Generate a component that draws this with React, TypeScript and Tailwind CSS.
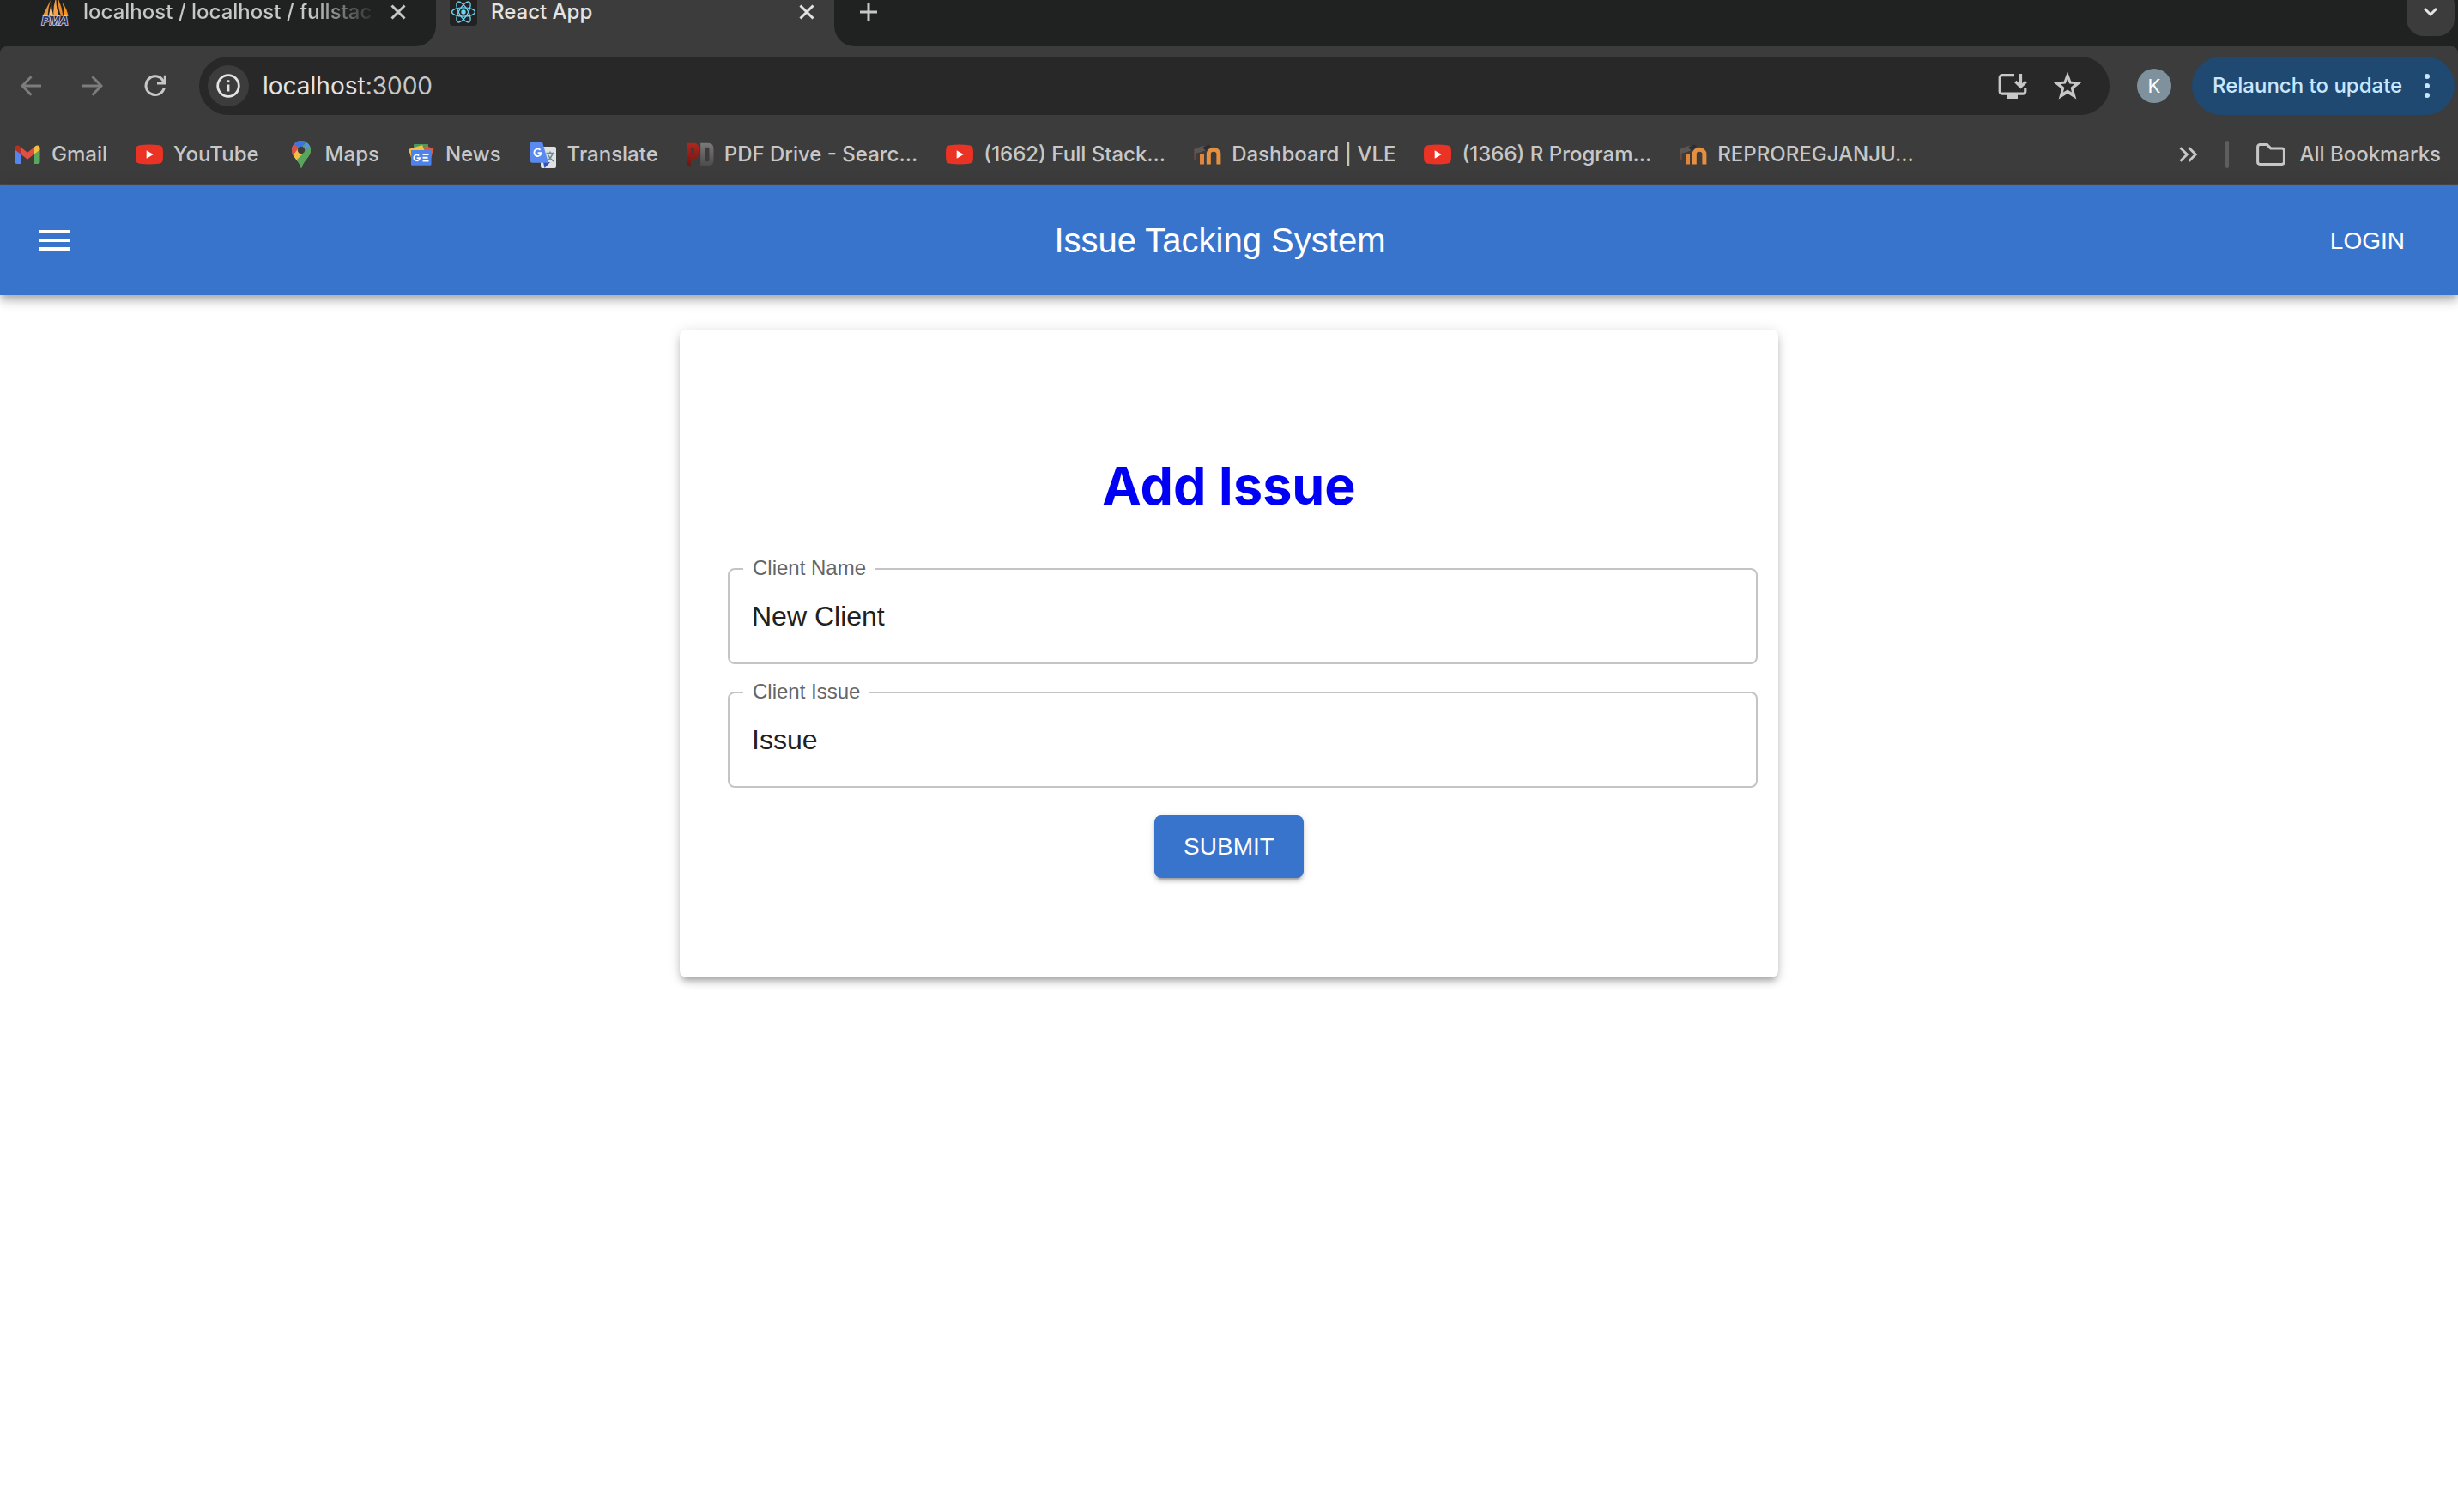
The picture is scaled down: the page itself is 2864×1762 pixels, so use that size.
import React from "react";

type IconProps = { className?: string };

const CloseIcon = ({ className = "" }: IconProps) => (
  <svg viewBox="0 0 20 20" className={`size-5 shrink-0 ${className}`} fill="none" stroke="currentColor" strokeWidth="3">
    <path d="M2.500 2.500l15 15M17.500 2.500l-15 15" />
  </svg>
);

const PlusIcon = () => (
  <svg viewBox="0 0 20 20" className="size-5" fill="none" stroke="currentColor" strokeWidth="3">
    <path d="M10 0v20M0 10h20" />
  </svg>
);

const ChevronDownIcon = () => (
  <svg viewBox="0 0 18 12" className="h-3 w-[18px]" fill="none" stroke="currentColor" strokeWidth="3">
    <path d="M2 2l7 7 7-7" />
  </svg>
);

const ArrowIcon = ({ className = "" }: IconProps) => (
  <svg viewBox="0 0 24 24" className={`size-6 ${className}`} fill="none" stroke="currentColor" strokeWidth="3">
    <path d="M24 12H2.500M12.500 1.200L2 12l10.500 10.800" />
  </svg>
);

const ReloadIcon = () => (
  <svg viewBox="0 0 26 26" className="size-[26px]" fill="none" stroke="currentColor" strokeWidth="3">
    <path d="M23.300 15.300A10.800 10.800 0 1 1 21.800 6.600L23 8.500" />
    <path d="M24.300 0.800v9.100h-9.300" />
  </svg>
);

const InfoIcon = () => (
  <svg viewBox="0 0 28 28" className="size-7" fill="none" stroke="currentColor" strokeWidth="2.800">
    <circle cx="14" cy="14" r="12.300" />
    <path d="M14 12.500v8" />
    <path d="M14 7.300v2.800" />
  </svg>
);

const InstallIcon = () => (
  <svg viewBox="0 0 34 32" className="h-8 w-[34px]" fill="none" stroke="currentColor" strokeWidth="3.200">
    <path d="M19 3.600H5a2.800 2.800 0 0 0-2.800 2.800v16a2.800 2.800 0 0 0 2.800 2.800h24a2.800 2.800 0 0 0 2.800-2.800V18" />
    <path d="M11 26h12v5H11z" fill="currentColor" stroke="none" />
    <path d="M26.500 2v14M20.300 11l6.200 6.200 6.200-6.200" />
  </svg>
);

const StarIcon = () => (
  <svg viewBox="0 0 34 34" className="size-[34px]" fill="currentColor">
    <path
      fillRule="evenodd"
      d="M17 0.500l4.200 11.300 12.300.900-9.500 7.900 3.300 11.800L17 25.900 6.700 32.400 10 20.600.5 12.700l12.300-.9zM17 9l-2.200 5.500-5.900.5 4.500 3.900-1.400 5.700 5-3.100 5 3.100-1.400-5.700 4.500-3.900-5.900-.5z"
    />
  </svg>
);

const MoreIcon = () => (
  <svg viewBox="0 0 6 32" className="h-8 w-1.5" fill="currentColor">
    <circle cx="3" cy="5" r="3" />
    <circle cx="3" cy="16" r="3" />
    <circle cx="3" cy="27" r="3" />
  </svg>
);

const OverflowIcon = () => (
  <svg viewBox="0 0 22 18" className="h-[18px] w-[22px]" fill="none" stroke="currentColor" strokeWidth="2.900">
    <path d="M1.500 1.200L9.300 9l-7.800 7.800M11.500 1.200L19.300 9l-7.800 7.800" />
  </svg>
);

const FolderIcon = () => (
  <svg viewBox="0 0 34 26" className="h-[26px] w-[34px]" fill="none" stroke="currentColor" strokeWidth="3">
    <path d="M4.200 1.600h8.300l4.200 4.300h13.100a2.600 2.600 0 0 1 2.600 2.600v13.300a2.600 2.600 0 0 1-2.600 2.600H4.200a2.600 2.600 0 0 1-2.600-2.600V4.200a2.600 2.600 0 0 1 2.600-2.600z" />
  </svg>
);

const MenuIcon = () => (
  <svg viewBox="0 0 36 24" className="h-6 w-9" fill="currentColor">
    <path d="M0 0h36v4H0zM0 10h36v4H0zM0 20h36v4H0z" />
  </svg>
);

const PmaLogo = () => (
  <svg viewBox="0 0 34 34" className="size-[34px] shrink-0">
    <path d="M12 3L2.500 22h6Q9 12 12 3z" fill="#e8963c" />
    <path d="M13 5L9.800 22l5.200-1Q12.500 13 13 5z" fill="#f7c27a" />
    <path d="M18.500 0q-4 10-3 22h6.500Q18 12 18.500 0z" fill="#f2a24a" />
    <path d="M20.500 1q0 13 4 21h2Q25 10 20.500 1z" fill="#e98a2e" />
    <path d="M25.500 6q3 8 2.500 16h4.500Q31 13 25.500 6z" fill="#f7921e" />
    <text x="17" y="32" textAnchor="middle" fontFamily="Liberation Sans, sans-serif" fontWeight="700" fontStyle="italic" fontSize="14" fill="#34345f" stroke="#d4d4e6" strokeWidth="1.600" paintOrder="stroke">
      PMA
    </text>
  </svg>
);

const ReactLogo = () => (
  <svg viewBox="0 0 32 32" className="size-8 shrink-0">
    <rect width="32" height="32" rx="4" fill="#222" />
    <circle cx="16" cy="16" r="2.700" fill="#6fd3f2" />
    <g fill="none" stroke="#6fd3f2" strokeWidth="1.300">
      <ellipse cx="16" cy="16" rx="13.500" ry="5.200" />
      <ellipse cx="16" cy="16" rx="13.500" ry="5.200" transform="rotate(60 16 16)" />
      <ellipse cx="16" cy="16" rx="13.500" ry="5.200" transform="rotate(120 16 16)" />
    </g>
  </svg>
);

const GmailLogo = () => (
  <svg viewBox="0 0 32 32" className="size-8 shrink-0">
    <path d="M1.500 10v14.800A2.200 2.200 0 0 0 3.700 27H8V14z" fill="#5386ee" />
    <path d="M30.500 10v14.800a2.200 2.200 0 0 1-2.200 2.200H24V14z" fill="#5aa75b" />
    <path d="M8 7.500l8 6.200 8-6.200V15.500l-8 6.200-8-6.200z" fill="#dd5144" />
    <path d="M1.500 8.500c0-3 3.200-4 5.200-2.200L8 7.500v8l-6.500-5z" fill="#b53126" />
    <path d="M30.500 8.500c0-3-3.200-4-5.200-2.200L24 7.500v8l6.500-5z" fill="#f3bf42" />
  </svg>
);

const YouTubeLogo = () => (
  <svg viewBox="0 0 32 32" className="size-8 shrink-0">
    <path d="M5 5.200q11-1.200 22 0 4.300.5 4.700 4.300.6 6.500 0 13-.4 3.800-4.700 4.300-11 1.200-22 0Q.7 26.300.3 22.500q-.6-6.500 0-13Q.7 5.700 5 5.200z" fill="#ea3324" />
    <path d="M12.700 11.200l8 4.800-8 4.800z" fill="#fff" />
  </svg>
);

const MapsLogo = () => (
  <svg viewBox="0 0 32 32" className="size-8 shrink-0">
    <defs>
      <clipPath id="pin">
        <path d="M16 0a11 11 0 0 1 11 11c0 4.500-2.200 7.300-5.200 10.900C18.800 25.600 17.500 28 16.900 30.700c-.3 1.200-1.500 1.200-1.800 0C14.500 28 13.200 25.600 10.200 21.900 7.200 18.300 5 15.500 5 11A11 11 0 0 1 16 0z" />
      </clipPath>
    </defs>
    <g clipPath="url(#pin)">
      <path d="M0 0h32v32H0z" fill="#58a55c" />
      <path d="M5 20L27 -4 16 -4 0 8z" fill="#3f74e0" />
      <path d="M16 11L28-3 24-2 30 8z" fill="#5b8def" />
      <path d="M7.500 3.800L16 11 6 22 0 12z" fill="#dd5144" />
      <path d="M6 17.500L12.500 9l8 6L10.500 26z" fill="#f3bf42" />
      <path d="M9 24L20 13l8-6v25H12z" fill="#58a55c" />
    </g>
    <circle cx="16" cy="11" r="4.200" fill="#3c3c3c" />
  </svg>
);

const NewsLogo = () => (
  <svg viewBox="0 0 32 32" className="size-8 shrink-0">
    <rect x="7" y="4" width="17" height="12" rx="1" fill="#4a9a5b" />
    <path d="M20 6l10.500 3-5 17-9-4z" fill="#e0563f" />
    <path d="M1 10l16-5 6 15-17 6z" fill="#f3bf42" />
    <path d="M4 11h23.500v16.500a1.200 1.200 0 0 1-1.200 1.200H5.200A1.200 1.200 0 0 1 4 27.500z" fill="#4f83ec" />
    <path d="M13.200 17.500a3.400 3.400 0 1 0 .9 2.700h-3.400" fill="none" stroke="#fff" strokeWidth="1.800" />
    <path d="M17.500 16h7M17.500 19.700h6M17.500 23.400h7" stroke="#fff" strokeWidth="2" />
  </svg>
);

const TranslateLogo = () => (
  <svg viewBox="0 0 32 32" className="size-8 shrink-0">
    <rect x="13" y="7" width="18" height="25" rx="2" fill="#dfe1e3" />
    <path d="M16 25h8l-6.500 7z" fill="#3550b5" />
    <path d="M3 1h11.800L22 25.800H3a2 2 0 0 1-2-2V3a2 2 0 0 1 2-2z" fill="#5a8af0" />
    <path d="M12.600 10.800a4.200 4.200 0 1 0 1.200 3.400H9.600" fill="none" stroke="#fff" strokeWidth="1.900" />
    <path d="M19.500 14.500h9.500M24 12.500v2M27 14.500q-1.500 5.500-6.500 9M21.500 16.500q2.500 5 6.500 7.500" fill="none" stroke="#6a8791" strokeWidth="1.500" />
  </svg>
);

const PdfDriveLogo = () => (
  <svg viewBox="0 0 32 32" className="size-8 shrink-0">
    <defs>
      <linearGradient id="pd-red" gradientUnits="userSpaceOnUse" x1="0" y1="2" x2="0" y2="30">
        <stop offset="0" stopColor="#b3271f" />
        <stop offset="1" stopColor="#6d1512" />
      </linearGradient>
      <linearGradient id="pd-gray" gradientUnits="userSpaceOnUse" x1="0" y1="2" x2="0" y2="30">
        <stop offset="0" stopColor="#7d7a7b" />
        <stop offset="1" stopColor="#4b494a" />
      </linearGradient>
    </defs>
    <path d="M2.500 29.500V5.200h6q3 0 3 3v7.300q0 3-3 3h-6" fill="none" stroke="url(#pd-red)" strokeWidth="5" />
    <path d="M18.700 5.200h6.300q4 0 4 4v13.600q0 4-4 4h-6.300z" fill="none" stroke="url(#pd-gray)" strokeWidth="5" />
  </svg>
);

const MoodleLogo = () => (
  <svg viewBox="0 0 32 32" className="size-8 shrink-0">
    <path d="M1.500 13v10" stroke="#6b4a3a" strokeWidth="2.500" />
    <path d="M9.500 27.500V15" stroke="#e0853c" strokeWidth="5" />
    <path d="M17.300 27.500V15.500a5.800 5.300 0 0 1 11.600 0V27.500" fill="none" stroke="#e5903f" strokeWidth="5" />
    <path d="M0 10l9-3.500 9-1-3 5-6 2.500-8 2z" fill="#5b5654" />
    <path d="M10 8l7-3.500 3 2-6 5z" fill="#2e2c2c" />
  </svg>
);

const bookmarks = [
  { label: "Gmail", Logo: GmailLogo },
  { label: "YouTube", Logo: YouTubeLogo },
  { label: "Maps", Logo: MapsLogo },
  { label: "News", Logo: NewsLogo },
  { label: "Translate", Logo: TranslateLogo },
  { label: "PDF Drive - Searc...", Logo: PdfDriveLogo },
  { label: "(1662) Full Stack...", Logo: YouTubeLogo },
  { label: "Dashboard | VLE", Logo: MoodleLogo },
  { label: "(1366) R Program...", Logo: YouTubeLogo },
  { label: "REPROREGJANJU...", Logo: MoodleLogo },
];

function TabStrip() {
  return (
    <div className="flex h-[54px] overflow-hidden bg-[#3c3c3c] text-[24px] font-medium leading-7">
      <div className="w-[508px] rounded-br-3xl bg-[#202221] text-[#c7c7c7]">
        <div className="flex h-7 items-center justify-between pl-[47px] pr-[34px]">
          <div className="flex items-center gap-4">
            <PmaLogo />
            <button className="whitespace-nowrap bg-linear-to-r from-[#c7c7c7] from-80% to-[#303231] bg-clip-text text-left text-transparent">
              localhost / localhost / fullstac
            </button>
          </div>
          <button aria-label="Close tab">
            <CloseIcon />
          </button>
        </div>
      </div>
      <div className="w-[464px] text-[#e3e3e3]">
        <div className="flex h-7 items-center pl-4 pr-[22px]">
          <ReactLogo />
          <button className="ml-4 flex-1 text-left">React App</button>
          <button aria-label="Close tab">
            <CloseIcon />
          </button>
        </div>
      </div>
      <div className="flex-1 rounded-bl-3xl bg-[#202221] text-[#c7c7c7]">
        <div className="flex h-7 items-center justify-between pl-[30px] pr-1">
          <button aria-label="New tab">
            <PlusIcon />
          </button>
          <button aria-label="Search tabs" className="flex h-14 w-14 items-center justify-center rounded-[20px] bg-[#3c3c3c] text-[#e3e3e3]">
            <ChevronDownIcon />
          </button>
        </div>
      </div>
    </div>
  );
}

function Toolbar() {
  return (
    <div className="flex items-center pb-3 pl-6 pr-1 pt-3 text-[#c7c7c7]">
      <div className="flex w-[208px] items-center gap-12">
        <button aria-label="Back" className="text-[#7c7c7c]">
          <ArrowIcon />
        </button>
        <button aria-label="Forward" className="text-[#7c7c7c]">
          <ArrowIcon className="rotate-180" />
        </button>
        <button aria-label="Reload">
          <ReloadIcon />
        </button>
      </div>
      <div className="flex h-[68px] flex-1 items-center rounded-full bg-[#282828] pl-2.5 pr-8">
        <button aria-label="Site information" className="flex size-12 items-center justify-center rounded-full bg-[#3c3c3c] text-[#e3e3e3]">
          <InfoIcon />
        </button>
        <div className="relative ml-4 flex-1 text-[28px] leading-10">
          <input aria-label="Address" defaultValue="localhost:3000" className="w-full bg-transparent text-transparent outline-none" />
          <span aria-hidden="true" className="pointer-events-none absolute inset-0 text-[#c7c7c7]">
            <span className="text-[#e3e3e3]">localhost</span>:3000
          </span>
        </div>
        <button aria-label="Install app">
          <InstallIcon />
        </button>
        <button aria-label="Bookmark this page" className="ml-[30px]">
          <StarIcon />
        </button>
      </div>
      <button aria-label="Profile" className="ml-8 flex size-10 items-center justify-center rounded-full bg-[#7e919d] text-[22px] text-white">
        K
      </button>
      <button className="ml-6 flex h-[68px] w-[306px] items-center justify-between whitespace-nowrap rounded-full bg-[#1f4971] pl-6 pr-[29px] text-[24px] font-medium text-[#c9e6ff]">
        Relaunch to update
        <MoreIcon />
      </button>
    </div>
  );
}

function BookmarksBar() {
  return (
    <nav aria-label="Bookmarks" className="flex h-[70px] items-center border-b-2 border-[#4a4a4a] pl-4 pr-5 text-[24px] font-medium text-[#c7c7c7]">
      <div className="flex flex-1 items-center gap-[33px]">
        {bookmarks.map(({ label, Logo }) => (
          <a key={label} href="#" className="flex items-center gap-3 whitespace-nowrap">
            <Logo />
            {label}
          </a>
        ))}
      </div>
      <button aria-label="More bookmarks">
        <OverflowIcon />
      </button>
      <div className="mx-8 h-8 w-1 rounded-full bg-[#5e5e5e]" />
      <button className="flex items-center gap-4 whitespace-nowrap">
        <FolderIcon />
        All Bookmarks
      </button>
    </nav>
  );
}

function AppBar() {
  return (
    <header className="relative flex h-32 items-center bg-[#3974cc] px-[46px] text-white shadow-[0_4px_8px_-2px_rgba(0,0,0,0.2),0_8px_10px_rgba(0,0,0,0.14),0_2px_20px_rgba(0,0,0,0.12)]">
      <button aria-label="Menu" className="mr-[62px]">
        <MenuIcon />
      </button>
      <div className="flex-1 text-center text-[40px] leading-[64px]">Issue Tacking System</div>
      <button className="px-4 text-[28px] leading-[49px]">LOGIN</button>
    </header>
  );
}

function TextField({ id, label, value }: { id: string; label: string; value: string }) {
  return (
    <div className="relative rounded-lg border-2 border-[#c4c4c4]">
      <label htmlFor={id} className="absolute -top-4 left-4 bg-white px-[11px] text-[24px] leading-7 text-[#666]">
        {label}
      </label>
      <input id={id} defaultValue={value} className="block h-[108px] w-full rounded-lg bg-transparent px-[26px] text-[32px] text-[#212121] outline-none" />
    </div>
  );
}

export default function App() {
  return (
    <div className="min-h-screen bg-white font-['Liberation_Sans',Arial,sans-serif]">
      <div className="bg-[#202221] font-['Inter',sans-serif]">
        <TabStrip />
        <div className="rounded-t-lg bg-[#3c3c3c]">
          <Toolbar />
          <BookmarksBar />
        </div>
      </div>
      <AppBar />
      <main className="px-8 pt-10">
        <form
          onSubmit={(e) => e.preventDefault()}
          className="mx-auto flex max-w-[1280px] flex-col gap-8 rounded-lg pb-[116px] pl-14 pr-6 pt-32 shadow-[0_6px_6px_-4px_rgba(0,0,0,0.2),0_6px_8px_rgba(0,0,0,0.14),0_2px_16px_rgba(0,0,0,0.12)]"
        >
          <h1 className="-ml-8 mb-2.5 text-center font-['Inter',sans-serif] text-[61px] font-bold leading-[108px] text-[#0000f5]">Add Issue</h1>
          <TextField id="client-name" label="Client Name" value="New Client" />
          <TextField id="client-issue" label="Client Issue" value="Issue" />
          <div className="-ml-8 flex justify-center">
            <button
              type="submit"
              className="rounded-lg bg-[#3974cc] px-[34px] py-3 text-[28px] leading-[49px] text-white shadow-[0_6px_2px_-4px_rgba(0,0,0,0.2),0_4px_4px_rgba(0,0,0,0.14),0_2px_10px_rgba(0,0,0,0.12)]"
            >
              SUBMIT
            </button>
          </div>
        </form>
      </main>
    </div>
  );
}
